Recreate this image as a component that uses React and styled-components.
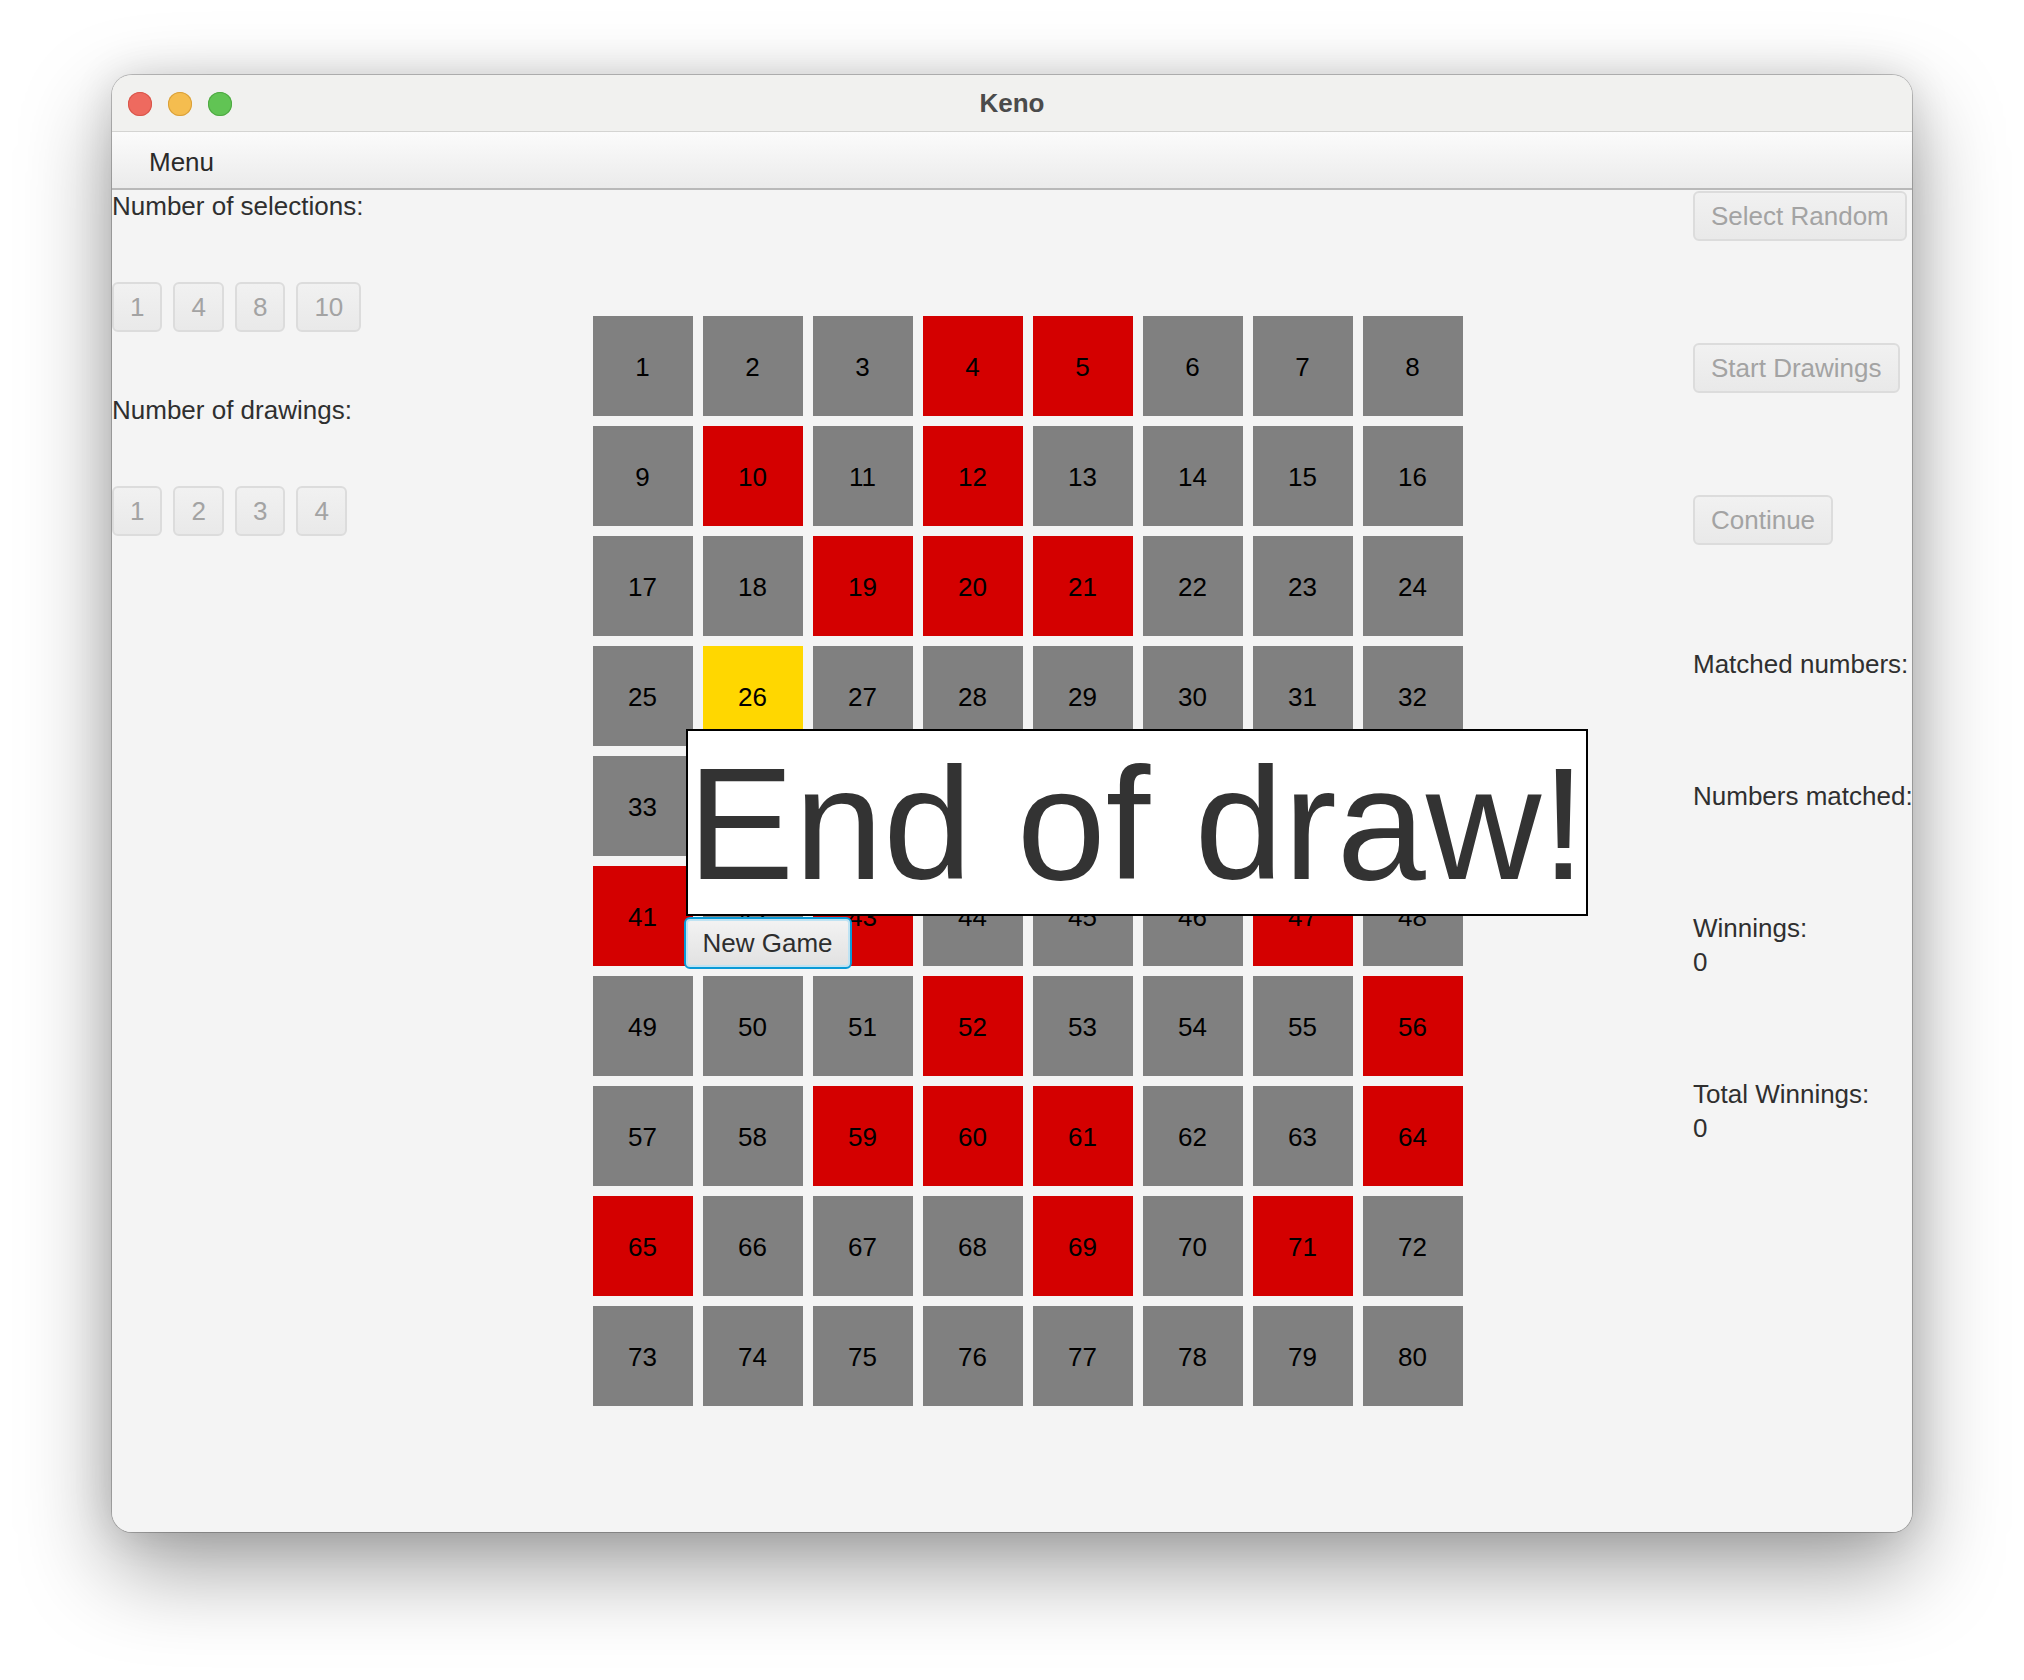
import React from "react"
import styled, { createGlobalStyle } from "styled-components"

const RED = [4, 5, 10, 12, 19, 20, 21, 41, 43, 47, 52, 56, 59, 60, 61, 64, 65, 69, 71]
const YELLOW = [26]

const cells = Array.from({ length: 80 }, (_, i) => {
  const n = i + 1
  let state = "idle"
  if (RED.includes(n)) state = "drawn"
  if (YELLOW.includes(n)) state = "hit"
  return { n, state }
})

const App = () => {
  return (
    <>
      <GlobalStyle />
      <Page>
        <Window>
          <TitleBar>
            <Lights>
              <Light color="#ee6a5f" edge="#d8564b" />
              <Light color="#f5bd4f" edge="#d9a03a" />
              <Light color="#61c454" edge="#4fa843" />
            </Lights>
            <Title>Keno</Title>
          </TitleBar>
          <MenuBar>
            <MenuItem>Menu</MenuItem>
          </MenuBar>
          <Content>
            <LeftCol>
              <Label>Number of selections:</Label>
              <ButtonRow className="first">
                {["1", "4", "8", "10"].map((t) => (
                  <FxButton key={t} disabled>{t}</FxButton>
                ))}
              </ButtonRow>
              <Label>Number of drawings:</Label>
              <ButtonRow>
                {["1", "2", "3", "4"].map((t) => (
                  <FxButton key={t} disabled>{t}</FxButton>
                ))}
              </ButtonRow>
            </LeftCol>

            <Center>
              <BoardWrap>
                <Board>
                  {cells.map((c) => (
                    <Cell key={c.n} state={c.state}>{c.n}</Cell>
                  ))}
                </Board>
                <Popup>
                  <Banner>End of draw!</Banner>
                  <FocusButton>New Game</FocusButton>
                </Popup>
              </BoardWrap>
            </Center>

            <RightCol>
              <Actions>
                <FxButton disabled>Select Random</FxButton>
                <FxButton disabled>Start Drawings</FxButton>
                <FxButton disabled>Continue</FxButton>
              </Actions>
              <Stats>
                <Stat>
                  <StatLine>Matched numbers:</StatLine>
                </Stat>
                <Stat>
                  <StatLine>Numbers matched:</StatLine>
                </Stat>
                <Stat>
                  <StatLine>Winnings:</StatLine>
                  <StatLine>0</StatLine>
                </Stat>
                <Stat>
                  <StatLine>Total Winnings:</StatLine>
                  <StatLine>0</StatLine>
                </Stat>
              </Stats>
            </RightCol>
          </Content>
        </Window>
      </Page>
    </>
  )
}

export default App

const GlobalStyle = createGlobalStyle`
  html, body {
    margin: 0;
    padding: 0;
    background: #ffffff;
  }
  body {
    font-family: "Liberation Sans", Arial, sans-serif;
  }
`

const Page = styled.div`
  width: 2024px;
  height: 1680px;
  padding-top: 75px;
  box-sizing: border-box;
  display: flex;
  justify-content: center;
  align-items: flex-start;
  overflow: hidden;
`

const Window = styled.div`
  width: 1800px;
  height: 1457px;
  border-radius: 20px;
  overflow: hidden;
  display: flex;
  flex-direction: column;
  background: #f4f4f4;
  box-shadow:
    0 0 0 1px rgba(0, 0, 0, 0.22),
    0 36px 90px rgba(0, 0, 0, 0.38),
    0 0 40px rgba(0, 0, 0, 0.12);
`

const TitleBar = styled.div`
  position: relative;
  height: 57px;
  flex: none;
  background: #f1f1ef;
  border-bottom: 1px solid #d4d4d2;
  box-sizing: border-box;
  display: flex;
  align-items: center;
  justify-content: center;
`

const Lights = styled.div`
  position: absolute;
  left: 16px;
  top: 17px;
  display: flex;
  gap: 16px;
`

const Light = styled.span`
  width: 24px;
  height: 24px;
  border-radius: 50%;
  background: ${(p) => p.color};
  box-shadow: inset 0 0 0 1px ${(p) => p.edge};
`

const Title = styled.div`
  font-size: 26px;
  font-weight: bold;
  color: #4b4b4b;
`

const MenuBar = styled.div`
  height: 58px;
  flex: none;
  box-sizing: border-box;
  background: linear-gradient(#fbfbfb, #ebebeb);
  border-bottom: 2px solid #b9b9b9;
  display: flex;
  align-items: center;
  padding: 4px 0 0 37px;
`

const MenuItem = styled.div`
  font-size: 26px;
  color: #2a2a2a;
`

const Content = styled.div`
  flex: 1;
  display: flex;
  background: #f4f4f4;
`

const LeftCol = styled.div`
  width: 250px;
  flex: none;
  display: flex;
  flex-direction: column;
  align-items: flex-start;

  .first {
    margin-bottom: 62px;
  }
`

const Label = styled.div`
  font-size: 26px;
  line-height: 32px;
  color: #2f2f2f;
  white-space: nowrap;
`

const StatLine = styled(Label)`
  line-height: 34px;
`

const ButtonRow = styled.div`
  display: flex;
  gap: 11px;
  margin-top: 60px;
`

const FxButton = styled.button`
  height: 50px;
  min-width: 50px;
  box-sizing: border-box;
  padding: 0 16px;
  font-family: "Liberation Sans", Arial, sans-serif;
  font-size: 26px;
  color: #a3a3a3;
  background: linear-gradient(#f1f1f1, #e9e9e9);
  border: 2px solid #dcdcdc;
  border-radius: 6px;
  white-space: nowrap;
`

const Center = styled.div`
  flex: 1;
  display: flex;
  align-items: center;
  justify-content: center;
`

const BoardWrap = styled.div`
  position: relative;
`

const Board = styled.div`
  display: grid;
  grid-template-columns: repeat(8, 100px);
  grid-auto-rows: 100px;
  gap: 10px;
`

const cellBg = {
  idle: "#808080",
  drawn: "#d40000",
  hit: "#ffd700",
}

const Cell = styled.div`
  background: ${(p) => cellBg[p.state]};
  display: flex;
  align-items: center;
  justify-content: center;
  font-size: 26px;
  padding-top: 2px;
  box-sizing: border-box;
  color: #000;
`

const Popup = styled.div`
  position: absolute;
  left: 93px;
  top: 413px;
  display: flex;
  flex-direction: column;
  align-items: flex-start;
`

const Banner = styled.div`
  width: 902px;
  height: 187px;
  box-sizing: border-box;
  background: #ffffff;
  border: 2px solid #000;
  padding-top: 4px;
  font-size: 160px;
  line-height: 178px;
  color: #333;
  white-space: nowrap;
  overflow: hidden;
`

const FocusButton = styled.button`
  margin-left: -2px;
  margin-top: 1px;
  height: 52px;
  box-sizing: border-box;
  padding: 0 17px;
  font-family: "Liberation Sans", Arial, sans-serif;
  font-size: 26px;
  color: #2e2e2e;
  background: linear-gradient(#f3f3f3, #e1e1e1);
  border: 2px solid #0a9ad6;
  box-shadow: inset 0 0 0 2px #bfe3f3;
  border-radius: 6px;
`

const RightCol = styled.div`
  width: 219px;
  flex: none;
  display: flex;
  flex-direction: column;
  align-items: flex-start;
  padding-top: 1px;
`

const Actions = styled.div`
  display: flex;
  flex-direction: column;
  align-items: flex-start;
  gap: 102px;
`

const Stats = styled.div`
  display: flex;
  flex-direction: column;
  gap: 98px;
  margin-top: 102px;
`

const Stat = styled.div`
  display: flex;
  flex-direction: column;
`
